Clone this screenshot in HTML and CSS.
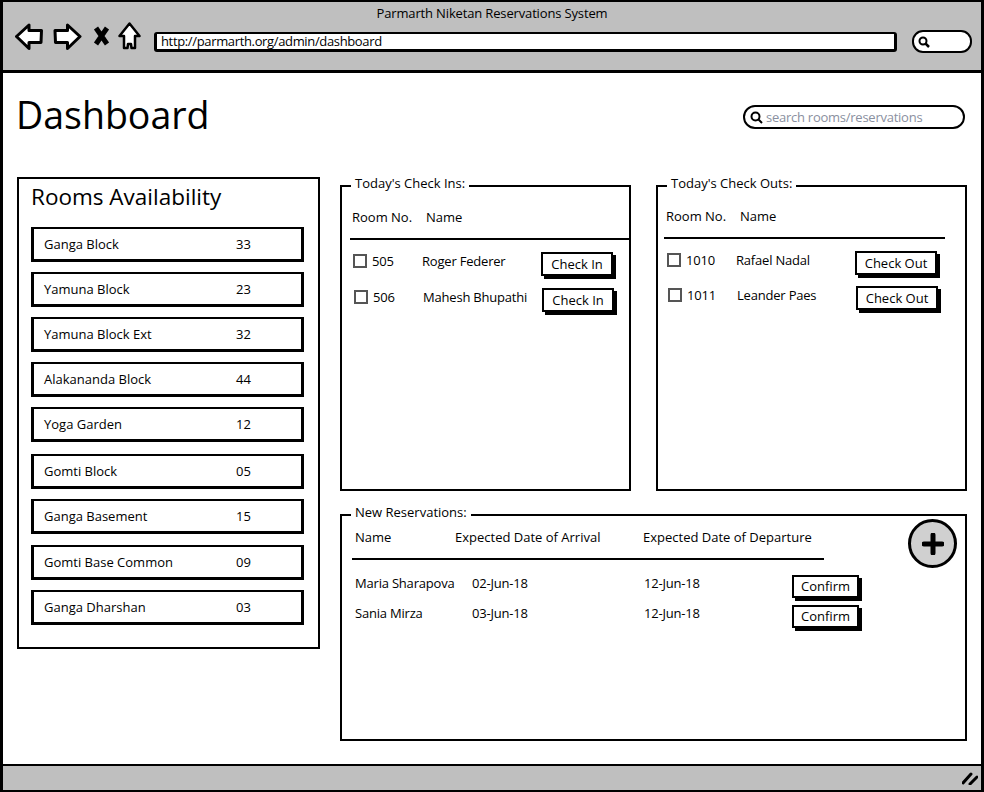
FILE: index.html
```html
<!DOCTYPE html>
<html lang="en">
<head>
    <meta charset="UTF-8">
    <meta name="viewport" content="width=device-width, initial-scale=1.0">
    <title>Parmarth Niketan Reservations System</title>
    <link rel="stylesheet" href="styles.css">
</head>
<body>
    <div class="window">
        <header class="toolbar">
            <div class="window-title">Parmarth Niketan Reservations System</div>
            <div class="nav-row">
                <svg class="nav-icon back" width="28" height="27" viewBox="0 0 28 27">
                    <path d="M1.5 13.5 L14 2 V7.5 H26.5 L26 19.5 H14 V25.5 Z" fill="#fff" stroke="#000" stroke-width="3" stroke-linejoin="round"/>
                </svg>
                <svg class="nav-icon forward" width="29" height="27" viewBox="0 0 29 27">
                    <path d="M27 13.5 L14.5 2 V7.5 H2 L2.5 19.5 H14.5 V25.5 Z" fill="#fff" stroke="#000" stroke-width="3" stroke-linejoin="round"/>
                </svg>
                <svg class="nav-icon stop" width="17" height="20" viewBox="0 0 17 20">
                    <path d="M3 2 L14 18 M14 2 L3 18" fill="none" stroke="#000" stroke-width="5"/>
                </svg>
                <svg class="nav-icon home" width="23" height="28" viewBox="0 0 23 28">
                    <path d="M11.5 1.5 L21.5 14 H17 V26 H13.5 L13 22 H10 L9.5 26 H6 V14 H1.5 Z" fill="#fff" stroke="#000" stroke-width="2.5" stroke-linejoin="round"/>
                </svg>
                <div class="url-bar">http://parmarth.org/admin/dashboard</div>
                <div class="mini-search">
                    <svg width="12" height="12" viewBox="0 0 12 12">
                        <circle cx="5" cy="5" r="3.5" fill="none" stroke="#000" stroke-width="2"/>
                        <path d="M7.5 7.5 L11 11" stroke="#000" stroke-width="2.5"/>
                    </svg>
                </div>
            </div>
        </header>

        <main class="page">
            <div class="page-head">
                <h1>Dashboard</h1>
                <div class="search-box">
                    <svg width="13" height="13" viewBox="0 0 13 13">
                        <circle cx="5.5" cy="5.5" r="4" fill="none" stroke="#000" stroke-width="2"/>
                        <path d="M8.5 8.5 L12 12" stroke="#000" stroke-width="2"/>
                    </svg>
                    <span>search rooms/reservations</span>
                </div>
            </div>

            <div class="columns">
                <section class="rooms">
                    <h2>Rooms Availability</h2>
                    <ul class="room-list">
                        <li><span>Ganga Block</span><span>33</span></li>
                        <li><span>Yamuna Block</span><span>23</span></li>
                        <li><span>Yamuna Block Ext</span><span>32</span></li>
                        <li><span>Alakananda Block</span><span>44</span></li>
                        <li><span>Yoga Garden</span><span>12</span></li>
                        <li><span>Gomti Block</span><span>05</span></li>
                        <li><span>Ganga Basement</span><span>15</span></li>
                        <li><span>Gomti Base Common</span><span>09</span></li>
                        <li><span>Ganga Dharshan</span><span>03</span></li>
                    </ul>
                </section>

                <div class="panels">
                    <fieldset class="panel check-ins">
                        <legend>Today's Check Ins:</legend>
                        <div class="list-head"><span>Room No.</span><span>Name</span></div>
                        <div class="guest-row">
                            <span class="tick"></span><span>505</span><span>Roger Federer</span>
                            <button type="button">Check In</button>
                        </div>
                        <div class="guest-row">
                            <span class="tick"></span><span>506</span><span>Mahesh Bhupathi</span>
                            <button type="button">Check In</button>
                        </div>
                    </fieldset>

                    <fieldset class="panel check-outs">
                        <legend>Today's Check Outs:</legend>
                        <div class="list-head"><span>Room No.</span><span>Name</span></div>
                        <div class="guest-row">
                            <span class="tick"></span><span>1010</span><span>Rafael Nadal</span>
                            <button type="button">Check Out</button>
                        </div>
                        <div class="guest-row">
                            <span class="tick"></span><span>1011</span><span>Leander Paes</span>
                            <button type="button">Check Out</button>
                        </div>
                    </fieldset>

                    <fieldset class="panel reservations">
                        <legend>New Reservations:</legend>
                        <div class="res-head"><span>Name</span><span>Expected Date of Arrival</span><span>Expected Date of Departure</span></div>
                        <div class="res-row">
                            <span>Maria Sharapova</span><span>02-Jun-18</span><span>12-Jun-18</span>
                            <button type="button">Confirm</button>
                        </div>
                        <div class="res-row">
                            <span>Sania Mirza</span><span>03-Jun-18</span><span>12-Jun-18</span>
                            <button type="button">Confirm</button>
                        </div>
                        <div class="add-button">
                            <svg width="22" height="22" viewBox="0 0 22 22">
                                <path d="M11 2 V20 M2 11 H20" stroke="#000" stroke-width="5" stroke-linecap="round"/>
                            </svg>
                        </div>
                    </fieldset>
                </div>
            </div>
        </main>

        <footer class="status-bar">
            <svg width="16" height="14" viewBox="0 0 16 14">
                <path d="M1 12 L9 3 M8 13 L15 6" stroke="#000" stroke-width="3" stroke-linecap="round"/>
            </svg>
        </footer>
    </div>
</body>
</html>
```

FILE: styles.css
```css
* {
    box-sizing: border-box;
}

body {
    margin: 0;
    font-family: "Open Sans", Arial, sans-serif;
    font-size: 13px;
    color: #000;
    background-color: #fff;
}

.window {
    display: flex;
    flex-direction: column;
    width: 984px;
    height: 792px;
    border: 2px solid #000;
    border-left-width: 3px;
    border-right-width: 3px;
}

/* barra do navegador */
.toolbar {
    height: 71px;
    flex: none;
    background-color: #bfbfbf;
    border-bottom: 3px solid #000;
}

.window-title {
    margin-top: 3px;
    height: 17px;
    line-height: 17px;
    text-align: center;
    letter-spacing: -0.15px;
}

.nav-row {
    display: flex;
    align-items: flex-start;
    margin-top: 1px;
    padding-left: 12px;
}

.nav-icon {
    flex: none;
    display: block;
}

.forward {
    margin-left: 10px;
}

.stop {
    margin: 3px 0 0 11px;
}

.home {
    margin: -1px 0 0 8px;
}

.url-bar {
    width: 743px;
    height: 20px;
    margin: 9px 0 0 13px;
    padding-left: 4px;
    line-height: 15px;
    letter-spacing: -0.35px;
    background-color: #fff;
    border: 2px solid #000;
    border-width: 2px 3px 3px 3px;
    border-radius: 3px;
}

.mini-search {
    display: flex;
    align-items: center;
    width: 60px;
    height: 23px;
    margin: 7px 0 0 15px;
    padding-left: 4px;
    background-color: #fff;
    border: 2px solid #000;
    border-radius: 11px;
}

/* conteudo */
.page {
    flex: 1;
    padding: 0 14px;
}

.page-head {
    display: flex;
    justify-content: space-between;
    align-items: center;
    height: 84px;
    padding: 0 2px 0 0;
}

h1 {
    margin: 0 0 2px -1px;
    font-size: 37.5px;
    font-weight: 400;
}

.search-box {
    display: flex;
    align-items: center;
    gap: 3px;
    width: 222px;
    height: 24px;
    margin-top: 4px;
    padding-left: 5px;
    color: #8a90a0;
    letter-spacing: -0.25px;
    border: 2px solid #000;
    border-radius: 12px;
}

.columns {
    display: flex;
    align-items: flex-start;
    margin-top: 18px;
}

.rooms {
    flex: none;
    width: 303px;
    height: 472px;
    margin-top: 2px;
    padding: 0 14px 0 12px;
    border: 2px solid #000;
}

h2 {
    margin: 0;
    height: 48px;
    line-height: 35px;
    font-size: 22.5px;
    font-weight: 400;
}

.room-list {
    margin: 0;
    padding: 0;
    list-style: none;
}

.room-list li {
    display: grid;
    grid-template-columns: 192px 1fr;
    align-items: center;
    height: 35px;
    margin-bottom: 10px;
    padding-left: 10px;
    border: 3px solid #000;
    border-top-width: 2px;
}

.room-list li:nth-child(5) {
    margin-bottom: 12px;
}

.room-list li:nth-child(7) {
    margin-bottom: 11px;
}

.panels {
    display: grid;
    grid-template-columns: 291px 311px;
    grid-template-rows: 316px 237px;
    column-gap: 25px;
    row-gap: 13px;
    margin-left: 20px;
}

.panel {
    position: relative;
    margin: 0;
    padding: 0;
    min-width: 0;
    border: 2px solid #000;
}

/* o padding de baixo sobe o texto em cima da borda */
.panel legend {
    margin-left: 9px;
    padding: 0 4px 6px;
    line-height: 16px;
}

.list-head {
    display: flex;
    align-items: center;
    height: 43px;
    margin-left: 8px;
    padding: 0 0 2px 2px;
    border-bottom: 2px solid #000;
}

.list-head span:first-child {
    width: 74px;
}

.guest-row {
    display: grid;
    grid-template-columns: 19px 50px 119px auto;
    align-items: center;
    height: 36px;
    padding-left: 11px;
    letter-spacing: -0.2px;
}

.guest-row + .guest-row {
    padding-left: 12px;
}

.list-head + .guest-row {
    margin-top: 3px;
}

.tick {
    width: 14px;
    height: 14px;
    border: 2px solid #555;
}

button {
    height: 24px;
    margin-top: 6px;
    padding: 0;
    font-family: inherit;
    font-size: 13px;
    background-color: #fff;
    border: 2px solid #000;
    box-shadow: 3px 3px 0 #000;
}

.check-ins button {
    width: 72px;
}

.check-outs {
    padding-right: 20px;
}

.check-outs .list-head {
    height: 42px;
    margin-left: 6px;
}

.check-outs .guest-row {
    height: 35px;
    padding-left: 9px;
}

.check-outs .guest-row + .guest-row {
    padding-left: 10px;
}

.check-outs button {
    width: 82px;
}

.reservations {
    grid-column: 1 / 3;
}

.res-head {
    display: grid;
    grid-template-columns: 100px 188px auto;
    align-items: center;
    width: 472px;
    height: 34px;
    margin-left: 10px;
    padding: 0 0 11px 3px;
    border-bottom: 2px solid #000;
}

.res-row {
    display: grid;
    grid-template-columns: 117px 172px 148px auto;
    align-items: center;
    height: 30px;
    padding-left: 13px;
    letter-spacing: -0.2px;
}

.res-head + .res-row {
    margin-top: 8px;
}

.res-row button {
    width: 67px;
    height: 23px;
}

.add-button {
    position: absolute;
    top: -7px;
    right: 8px;
    display: flex;
    align-items: center;
    justify-content: center;
    width: 49px;
    height: 49px;
    background-color: #d0d0d0;
    border: 3px solid #000;
    border-radius: 50%;
}

.status-bar {
    display: flex;
    justify-content: flex-end;
    align-items: center;
    height: 26px;
    flex: none;
    padding-right: 3px;
    background-color: #bfbfbf;
    border-top: 2px solid #000;
}
```
